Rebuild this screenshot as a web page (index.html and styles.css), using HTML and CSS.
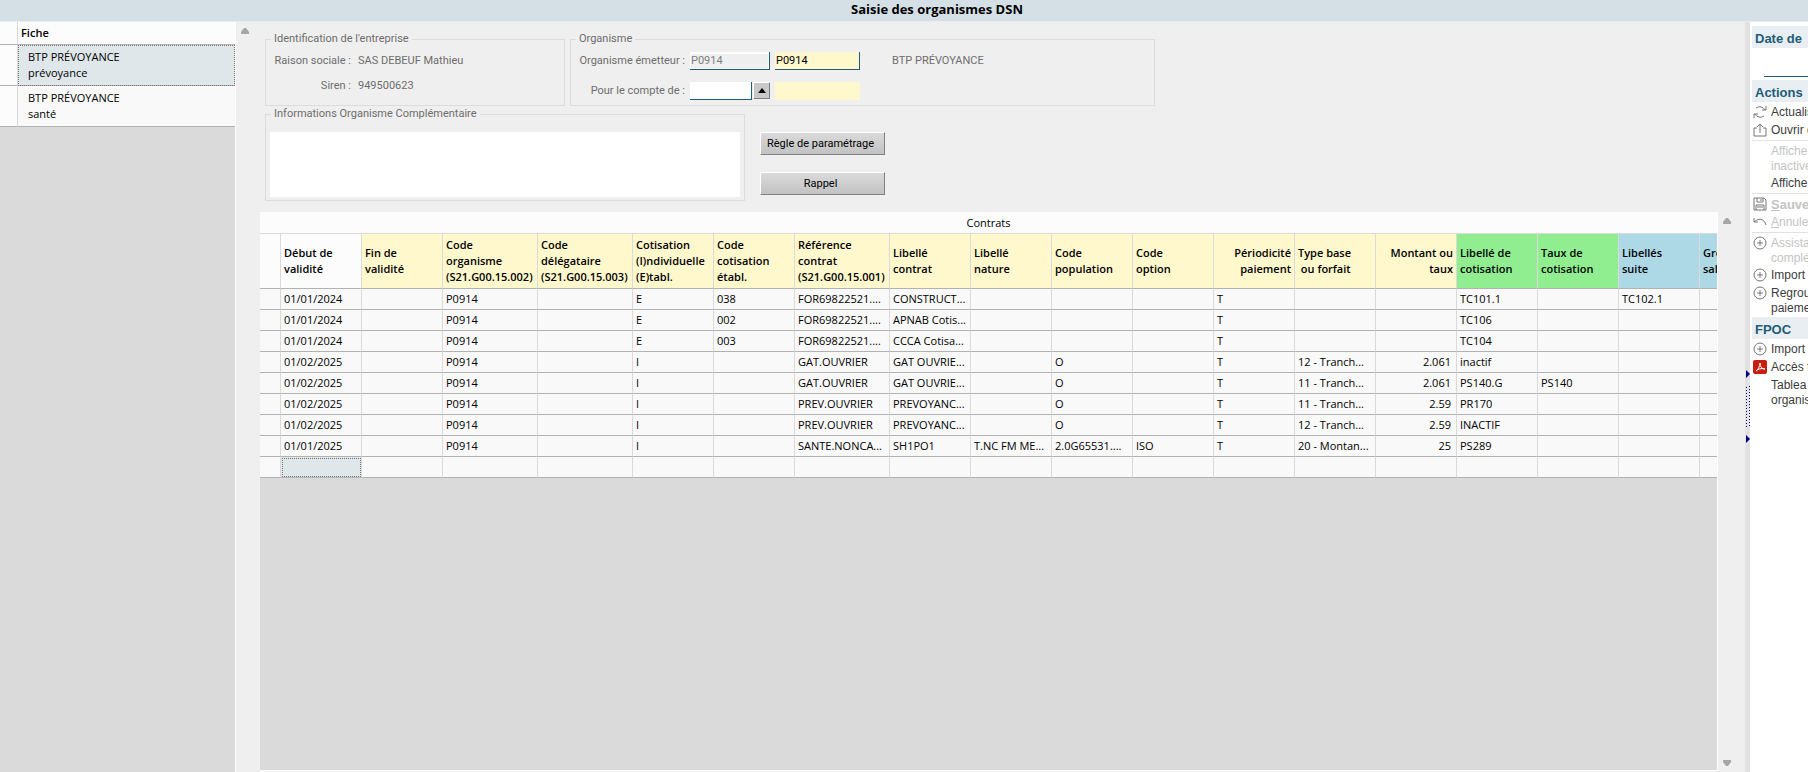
FILE: index.html
```
<!DOCTYPE html>
<html lang="fr">
<head>
    <meta charset="UTF-8">
    <meta name="viewport" content="width=device-width, initial-scale=1.0">
    <title>Saisie des organismes DSN</title>
    <link rel="stylesheet" href="styles.css">
</head>
<body>
    <h1 class="titre">Saisie des organismes DSN</h1>

    <div class="page">
        <!-- Liste des fiches -->
        <aside class="fiches">
            <table class="liste">
                <colgroup>
                    <col class="col-marge">
                    <col>
                </colgroup>
                <thead>
                    <tr><th></th><th>Fiche</th></tr>
                </thead>
                <tbody>
                    <tr class="actif"><td></td><td>BTP PRÉVOYANCE<br>prévoyance</td></tr>
                    <tr><td></td><td>BTP PRÉVOYANCE<br>santé</td></tr>
                </tbody>
            </table>
        </aside>
        <div class="defilement defilement-fiches">
            <svg width="8" height="6" viewBox="0 0 8 6"><path d="M3 0h2l3 4v2H0V4z" fill="#a6a6a6"/></svg>
        </div>

        <main class="contenu">
            <div class="haut">
                <div class="ligne">
                    <fieldset class="cadre entreprise">
                        <legend>Identification de l'entreprise</legend>
                        <dl>
                            <dt>Raison sociale :</dt><dd>SAS DEBEUF Mathieu</dd>
                            <dt>Siren :</dt><dd>949500623</dd>
                        </dl>
                    </fieldset>
                    <fieldset class="cadre organisme">
                        <legend>Organisme</legend>
                        <div class="champs">
                            <label for="emetteur">Organisme émetteur :</label>
                            <input type="text" id="emetteur" class="gris" value="P0914" disabled>
                            <input type="text" class="jaune" value="P0914" aria-label="Code émetteur">
                            <span class="nom">BTP PRÉVOYANCE</span>

                            <label for="compte">Pour le compte de :</label>
                            <div class="combo">
                                <input type="text" id="compte">
                                <button type="button" class="fleche" aria-label="Choisir">
                                    <svg width="8" height="5" viewBox="0 0 8 5"><path d="M4 0l4 5H0z"/></svg>
                                </button>
                            </div>
                            <input type="text" class="jaune plat" aria-label="Code du compte">
                        </div>
                    </fieldset>
                </div>
                <div class="ligne">
                    <fieldset class="cadre infos">
                        <legend>Informations Organisme Complémentaire</legend>
                        <textarea aria-label="Informations Organisme Complémentaire"></textarea>
                    </fieldset>
                    <div class="boutons">
                        <button type="button">Règle de paramétrage</button>
                        <button type="button">Rappel</button>
                    </div>
                </div>
            </div>

            <div class="bas">
                <div class="grille">
                    <h2 id="titre-contrats">Contrats</h2>
                    <table class="contrats" aria-labelledby="titre-contrats">
                        <colgroup>
                            <col class="c-tete"><col><col><col class="c-large"><col class="c-large"><col><col><col class="c-large">
                            <col><col><col><col><col><col><col><col><col><col><col>
                        </colgroup>
                        <thead>
                            <tr>
                                <th></th>
                                <th>Début de<br>validité</th>
                                <th class="jaune">Fin de<br>validité</th>
                                <th class="jaune">Code<br>organisme<br>(S21.G00.15.002)</th>
                                <th class="jaune">Code<br>délégataire<br>(S21.G00.15.003)</th>
                                <th class="jaune">Cotisation<br>(I)ndividuelle<br>(E)tabl.</th>
                                <th class="jaune">Code<br>cotisation<br>établ.</th>
                                <th class="jaune">Référence<br>contrat<br>(S21.G00.15.001)</th>
                                <th class="jaune">Libellé<br>contrat</th>
                                <th class="jaune">Libellé<br>nature</th>
                                <th class="jaune">Code<br>population</th>
                                <th class="jaune">Code<br>option</th>
                                <th class="jaune droite">Périodicité<br>paiement</th>
                                <th class="jaune">Type base<br>&nbsp;ou forfait</th>
                                <th class="jaune droite">Montant ou<br>taux</th>
                                <th class="vert">Libellé de<br>cotisation</th>
                                <th class="vert">Taux de<br>cotisation</th>
                                <th class="bleu">Libellés<br>suite</th>
                                <th class="bleu">Gro<br>sal</th>
                            </tr>
                        </thead>
                        <tbody id="lignes"></tbody>
                    </table>
                </div>
                <div class="defilement">
                    <svg width="8" height="6" viewBox="0 0 8 6"><path d="M3 0h2l3 4v2H0V4z" fill="#a6a6a6"/></svg>
                    <svg width="8" height="6" viewBox="0 0 8 6"><path d="M0 0h8v2L5 6H3L0 2z" fill="#a6a6a6"/></svg>
                </div>
            </div>
        </main>

        <div class="separateur">
            <svg width="4" height="8" viewBox="0 0 4 8"><path d="M0 0l4 4-4 4z" fill="#000080"/></svg>
            <svg width="4" height="41" viewBox="0 0 4 41" shape-rendering="crispEdges"><path d="M3.5 0v41M.5 1v40" stroke="#000080" stroke-dasharray="1 2"/></svg>
            <svg width="4" height="8" viewBox="0 0 4 8"><path d="M0 0l4 4-4 4z" fill="#000080"/></svg>
        </div>

        <!-- Panneau des actions -->
        <nav class="actions">
            <h2><label for="date">Date de</label></h2>
            <input type="text" id="date" class="date">
            <h2>Actions</h2>
            <ul>
                <li><a href="#"><svg class="icone" viewBox="0 0 14 14"><path d="M3 3a6 6 0 0 1 9 2M13 1v4H9M11 11a6 6 0 0 1-9-2M1 13V9h4"/></svg>Actualis</a></li>
                <li><a href="#"><svg class="icone" viewBox="0 0 14 14"><path d="M4 5H1v8h12V5h-3M7 10V1M4 4l3-3 3 3"/></svg>Ouvrir d</a></li>
            </ul>
            <ul>
                <li class="double inactif"><a href="#">Affiche<br>inactive</a></li>
                <li><a href="#">Affiche</a></li>
            </ul>
            <ul>
                <li class="inactif gras"><a href="#"><svg class="icone" viewBox="0 0 14 14"><path d="M1 1h10l2 2v10H1zM4 1v4h6V1M8 2v2M3 13V8h8v5M4 10h6"/></svg><u>S</u>auve</a></li>
                <li class="inactif"><a href="#"><svg class="icone" viewBox="0 0 14 14"><path d="M1 3v4h4M1 7c4-4 10-4 12 3"/></svg><u>A</u>nnule</a></li>
            </ul>
            <ul class="fin">
                <li class="double inactif"><a href="#"><svg class="icone" viewBox="0 0 14 14"><circle cx="7" cy="7" r="6"/><path d="M7 4v6M4 7h6"/></svg>Assista<br>complé</a></li>
                <li><a href="#"><svg class="icone" viewBox="0 0 14 14"><circle cx="7" cy="7" r="6"/><path d="M7 4v6M4 7h6"/></svg>Import</a></li>
                <li class="double"><a href="#"><svg class="icone" viewBox="0 0 14 14"><circle cx="7" cy="7" r="6"/><path d="M7 4v6M4 7h6"/></svg>Regrou<br>paieme</a></li>
            </ul>
            <h2>FPOC</h2>
            <ul class="fin">
                <li><a href="#"><svg class="icone" viewBox="0 0 14 14"><circle cx="7" cy="7" r="6"/><path d="M7 4v6M4 7h6"/></svg>Import</a></li>
                <li><a href="#"><svg class="icone pdf" viewBox="0 0 14 14"><rect width="14" height="14" rx="2"/><path d="M3 11c2-1 4-5 4-8M7 3c0 4 2 6 5 6M3 11c2-2 5-3 9-2"/></svg>Accès f</a></li>
                <li class="double"><a href="#">Tablea<br>organis</a></li>
            </ul>
        </nav>
    </div>

    <script src="script.js"></script>
</body>
</html>
```
FILE: script.js
```
// Contrats : une entrée par ligne, dans l'ordre des colonnes
const contrats = [
    ["01/01/2024", "", "P0914", "", "E", "038", "FOR69822521....", "CONSTRUCT...", "", "", "", "T", "", "", "TC101.1", "", "TC102.1", ""],
    ["01/01/2024", "", "P0914", "", "E", "002", "FOR69822521....", "APNAB Cotis...", "", "", "", "T", "", "", "TC106", "", "", ""],
    ["01/01/2024", "", "P0914", "", "E", "003", "FOR69822521....", "CCCA Cotisa...", "", "", "", "T", "", "", "TC104", "", "", ""],
    ["01/02/2025", "", "P0914", "", "I", "", "GAT.OUVRIER", "GAT OUVRIE...", "", "O", "", "T", "12 - Tranch...", "2.061", "inactif", "", "", ""],
    ["01/02/2025", "", "P0914", "", "I", "", "GAT.OUVRIER", "GAT OUVRIE...", "", "O", "", "T", "11 - Tranch...", "2.061", "PS140.G", "PS140", "", ""],
    ["01/02/2025", "", "P0914", "", "I", "", "PREV.OUVRIER", "PREVOYANC...", "", "O", "", "T", "11 - Tranch...", "2.59", "PR170", "", "", ""],
    ["01/02/2025", "", "P0914", "", "I", "", "PREV.OUVRIER", "PREVOYANC...", "", "O", "", "T", "12 - Tranch...", "2.59", "INACTIF", "", "", ""],
    ["01/01/2025", "", "P0914", "", "I", "", "SANTE.NONCA...", "SH1PO1", "T.NC FM ME...", "2.0G65531....", "ISO", "T", "20 - Montan...", "25", "PS289", "", "", ""],
    ["", "", "", "", "", "", "", "", "", "", "", "", "", "", "", "", "", ""]
];

const MONTANT = 13;
const lignes = document.getElementById("lignes");

contrats.forEach(function (contrat, index) {
    const tr = document.createElement("tr");
    tr.appendChild(document.createElement("td"));
    contrat.forEach(function (valeur, colonne) {
        const td = document.createElement("td");
        td.textContent = valeur;
        if (colonne === MONTANT) {
            td.className = "montant";
        }
        // la ligne de saisie vide a le focus sur sa première case
        if (index === contrats.length - 1 && colonne === 0) {
            td.className = "focus";
        }
        tr.appendChild(td);
    });
    lignes.appendChild(tr);
});
```
FILE: styles.css
```
* {
    box-sizing: border-box;
}

body {
    margin: 0;
    height: 100vh;
    display: flex;
    flex-direction: column;
    overflow: hidden;
    background: #efefef;
    color: #000;
    font-family: "Open Sans", "Noto Sans", sans-serif;
    font-size: 11px;
}

.titre {
    margin: 0;
    padding-left: 66px;
    height: 22px;
    line-height: 19px;
    font-size: 13px;
    text-align: center;
    background: #d5e0e6;
    border-bottom: 1px solid #e8ecee;
}

.page {
    flex: 1;
    min-height: 0;
    display: flex;
}

table {
    border-collapse: separate;
    border-spacing: 0;
    table-layout: fixed;
}

th {
    font-weight: 600;
    text-align: left;
}

/* Liste des fiches */
.fiches {
    flex: 0 0 236px;
    background: #dadada;
    border-right: 1px solid #fff;
}

.liste {
    width: 100%;
    line-height: 16px;
}

.liste .col-marge {
    width: 18px;
}

.liste th,
.liste td {
    height: 41px;
    padding: 0 10px;
    background: #f9f9f9;
    border-bottom: 1px solid #b2b2b2;
}

.liste th {
    height: 23px;
    padding: 0 3px;
    background: #fcfcfc;
}

.liste th:first-child,
.liste td:first-child {
    padding: 0;
    background: #fcfcfc;
    border-right: 1px solid #dadada;
}

.liste .actif td:last-child {
    background: #dfe7ea;
    outline: 1px dotted #777;
    outline-offset: -1px;
}

.defilement {
    flex: 0 0 27px;
    display: flex;
    flex-direction: column;
    justify-content: space-between;
    padding: 6px 5px;
}

.defilement-fiches {
    flex-basis: 24px;
}

/* Formulaire */
.contenu {
    flex: 1;
    min-width: 0;
    display: flex;
    flex-direction: column;
}

.haut {
    display: flex;
    flex-direction: column;
    gap: 1px;
    padding: 10px 5px 11px;
    color: #6d6d6d;
    font-family: Roboto, "Open Sans", sans-serif;
}

.ligne {
    display: flex;
    gap: 5px;
}

.cadre {
    margin: 0;
    padding: 0 4px;
    border: 1px solid #dcdcdc;
    height: 74px;
}

.cadre legend {
    margin-left: 1px;
    padding: 0 3px;
    line-height: 14px;
}

.entreprise {
    width: 300px;
}

.entreprise dl {
    display: grid;
    grid-template-columns: 81px 1fr;
    gap: 9px 7px;
    margin: 0;
    padding-top: 7px;
    line-height: 16px;
}

.entreprise dt {
    text-align: right;
}

.entreprise dd {
    margin: 0;
}

.organisme {
    width: 585px;
}

.champs {
    display: grid;
    grid-template-columns: 110px 80px 85px 1fr;
    gap: 12px 5px;
    align-items: center;
    padding-top: 6px;
    line-height: 18px;
    white-space: nowrap;
}

.champs label {
    text-align: right;
}

.champs input {
    width: 100%;
    height: 18px;
    padding: 0 1px;
    border: 0;
    border-right: 1px solid #1f5c78;
    border-bottom: 1px solid #1f5c78;
    font: inherit;
    background: #fff;
    color: #000;
}

.champs .gris {
    background: #efefef;
    color: #808080;
    box-shadow: inset 1px 2px #fff, inset -1px -1px #fff;
}

.champs .jaune {
    background: #fff8cd;
}

.champs .plat {
    border: 0;
}

.champs .nom {
    padding-left: 27px;
}

.combo {
    display: flex;
    gap: 1px;
}

.combo input {
    flex: 1;
    min-width: 0;
}

.fleche {
    flex: 0 0 17px;
    display: flex;
    align-items: center;
    justify-content: center;
    padding: 0;
    height: 17px;
    border: 1px solid;
    border-color: #fff #808080 #808080 #fff;
    background: #c8c8c8;
}

.infos {
    width: 480px;
    height: 94px;
}

.infos textarea {
    display: block;
    width: 100%;
    height: 65px;
    margin-top: 11px;
    border: 0;
    resize: none;
    background: #fff;
}

.boutons {
    display: flex;
    flex-direction: column;
    gap: 17px;
    padding: 25px 10px 0;
}

.boutons button {
    width: 125px;
    height: 23px;
    padding: 0 4px 0 0;
    border: 1px solid;
    border-color: #fff #808080 #808080 #fff;
    background: linear-gradient(#dadada, #c2c2c2);
    color: #000;
    font: inherit;
    white-space: nowrap;
}

/* Grille des contrats */
.bas {
    flex: 1;
    min-height: 0;
    display: flex;
}

.grille {
    flex: 1;
    min-width: 0;
    margin-bottom: 1px;
    overflow: hidden;
    background: #dadada;
    border-right: 1px solid #fff;
    border-bottom: 1px solid #fff;
}

.grille h2 {
    margin: 0;
    height: 22px;
    line-height: 21px;
    font-size: 11px;
    font-weight: 400;
    text-align: center;
    background: #fcfcfc;
    border-bottom: 1px solid #dadada;
}

.contrats {
    width: 100%;
    line-height: 16px;
    white-space: nowrap;
}

.contrats col {
    width: 81px;
}

.contrats .c-tete {
    width: 21px;
}

.contrats .c-large {
    width: 95px;
}

.contrats th,
.contrats td {
    height: 21px;
    padding: 0 3px;
    overflow: hidden;
    background: #f9f9f9;
    border-right: 1px solid #dadada;
    border-bottom: 1px solid #b2b2b2;
}

.contrats th {
    height: 55px;
    background: #fcfcfc;
}

.contrats .jaune {
    background: #fff8cd;
}

.contrats .vert {
    background: #90ee90;
}

.contrats .bleu {
    background: #add8e6;
}

.contrats .droite {
    text-align: right;
}

.contrats .montant {
    padding-right: 5px;
    text-align: right;
}

.contrats .focus {
    background: #dfe7ea;
    outline: 1px dotted #777;
    outline-offset: -2px;
}

/* Séparateur et actions */
.separateur {
    flex: 0 0 5px;
    display: flex;
    flex-direction: column;
    align-items: flex-end;
    gap: 8px;
    padding-top: 348px;
    background: #e2e2e2;
}

.actions {
    flex: 0 0 58px;
    overflow: hidden;
    padding: 4px 0 0 2px;
    background: #fff;
    color: #3c3c3c;
    font-family: "Liberation Sans", Arial, sans-serif;
    font-size: 12px;
    line-height: 15px;
    white-space: nowrap;
}

.actions h2 {
    margin: 0;
    padding-left: 3px;
    height: 22px;
    line-height: 25px;
    font-size: 13px;
    color: #1f5c78;
    background: #e8eef1;
}

.actions .date {
    display: block;
    width: 100px;
    height: 29px;
    margin: 0 0 3px 12px;
    border: 0;
    border-bottom: 1px solid #1f5c78;
}

.actions ul {
    margin: 0;
    padding: 2px 0 0;
    list-style: none;
    border-bottom: 1px solid #e2e2e2;
}

.actions .fin {
    border-bottom: 0;
}

.actions li {
    padding: 1px 0 2px;
}

.actions .double {
    padding-bottom: 1px;
}

.actions a {
    display: block;
    padding-left: 19px;
    color: inherit;
    text-decoration: none;
}

.icone {
    float: left;
    width: 14px;
    height: 14px;
    margin-left: -18px;
    fill: none;
    stroke: #777;
}

.pdf rect {
    fill: #c81e0f;
    stroke: none;
}

.pdf path {
    stroke: #fff;
}

.inactif {
    color: #c3c3c3;
}

.gras {
    font-weight: bold;
    font-size: 13px;
}
```
